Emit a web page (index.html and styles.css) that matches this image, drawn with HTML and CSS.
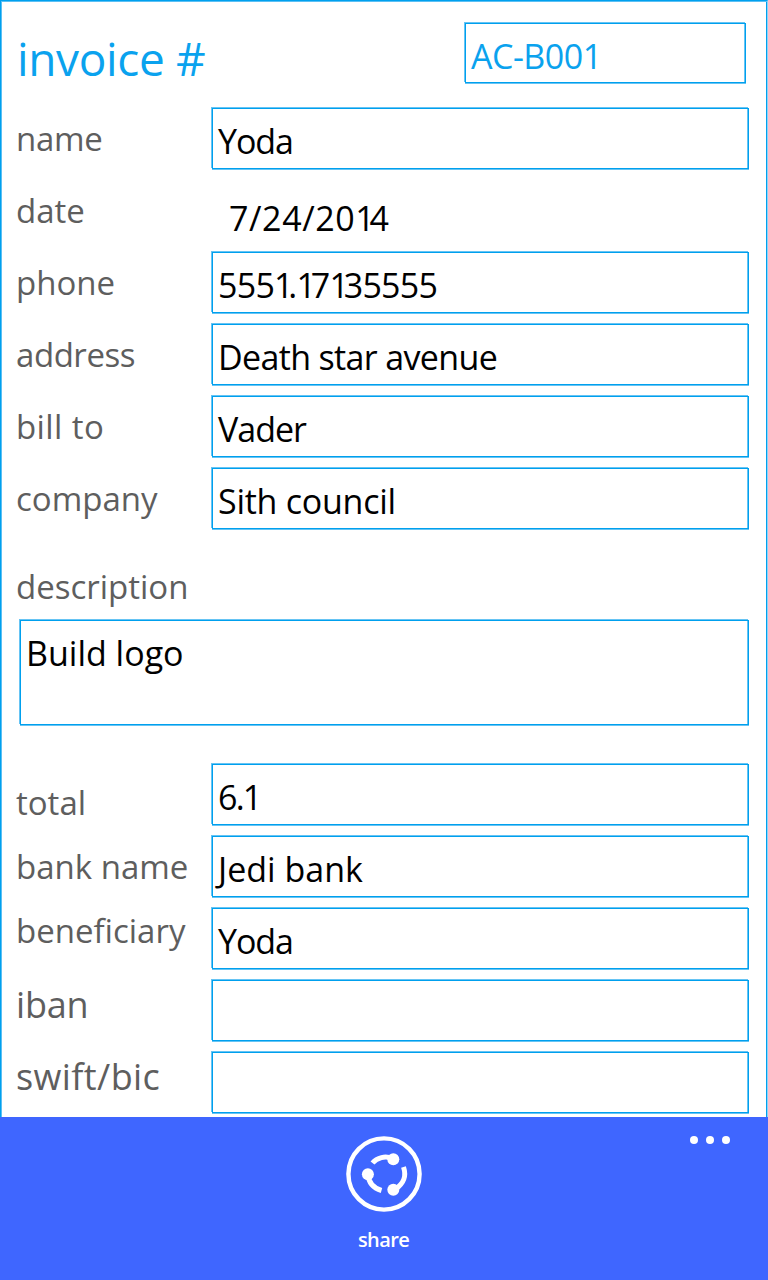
FILE: index.html
```html
<!DOCTYPE html>
<html lang="en">
<head>
<meta charset="utf-8">
<title>Invoice</title>
<link rel="stylesheet" href="styles.css">
</head>
<body>
<main class="page">
  <header class="head">
    <h1 class="title">invoice #</h1>
    <div class="field number"><span class="t-num">AC-B001</span></div>
  </header>
  <section class="rows">
    <div class="row"><span class="label t-name">name</span><div class="field"><span class="t-yoda">Yoda</span></div></div>
    <div class="row"><span class="label t-date">date</span><div class="plain"><span class="t-day">7/24/20<b>1</b>4</span></div></div>
    <div class="row"><span class="label t-phone">phone</span><div class="field"><span class="t-tel">555<b>1</b>.<b>1</b>7<b>1</b>35555</span></div></div>
    <div class="row"><span class="label t-address">address</span><div class="field"><span class="t-avenue">Death star avenue</span></div></div>
    <div class="row"><span class="label t-bill">bill to</span><div class="field"><span class="t-vader">Vader</span></div></div>
    <div class="row"><span class="label t-company">company</span><div class="field"><span class="t-sith">Sith council</span></div></div>
  </section>
  <section class="about">
    <span class="label t-description">description</span>
    <div class="field area"><span class="t-build">Build logo</span></div>
  </section>
  <section class="rows">
    <div class="row"><span class="label t-total">total</span><div class="field"><span class="t-amount">6.1</span></div></div>
    <div class="row"><span class="label t-bank">bank name</span><div class="field"><span class="t-jedi">Jedi bank</span></div></div>
    <div class="row"><span class="label t-benef">beneficiary</span><div class="field"><span class="t-yoda">Yoda</span></div></div>
    <div class="row"><span class="label big t-iban">iban</span><div class="field"></div></div>
    <div class="row"><span class="label big t-swift">swift/bic</span><div class="field"></div></div>
  </section>
</main>
<footer class="bar">
  <div class="share">
    <svg class="icon" width="76" height="76" viewBox="0 0 76 76" fill="none" stroke="#fff">
      <circle cx="38" cy="38" r="35.6" stroke-width="4.4"/>
      <g stroke-width="5">
        <path d="M26.500 27C31 21.500 39 19.500 47 22.500"/>
        <path d="M57.500 31C60.500 40 58.500 47 49 53.500"/>
        <path d="M22 38C22.500 46 27 52 35.500 54.500"/>
      </g>
      <g fill="#fff" stroke="none"><circle cx="47.300" cy="23.200" r="6"/><circle cx="21.900" cy="38.300" r="6"/><circle cx="47.300" cy="53.700" r="6"/></g>
    </svg>
    <span class="t-share">share</span>
  </div>
  <div class="dots"><i></i><i></i><i></i></div>
</footer>
</body>
</html>
```
FILE: styles.css
```css
* { box-sizing: border-box; }
body {
  margin: 0;
  width: 768px;
  height: 1280px;
  overflow: hidden;
  background: #fff;
  color: #000;
  font: 400 34px/46px "Open Sans", "Noto Sans", sans-serif;
}
.page {
  height: 1117px;
  overflow: hidden;
  border: 1px solid #00a0ee;
  border-right-color: #8fd3f7;
  border-bottom: 0;
  box-shadow: inset 1px 1px 0 #5bc0f4, inset -1px 0 0 #00a0ee;
}
.head {
  display: flex;
  justify-content: space-between;
  height: 103px;
  padding: 22px 21px 0 16px;
}
.title {
  margin: 3px 0 0;
  font-size: 46px;
  font-weight: 400;
  line-height: 64px;
  letter-spacing: -0.35px;
  color: #0aa2ee;
}
.field {
  width: 537px;
  height: 61px;
  padding: 9px 0 0 5px;
  border: 1px solid #00a0ee;
  box-shadow: -1px -1px 0 #66c4f4, 0 1px 0 #66c4f4, inset -1px 0 0 #66c4f4;
  white-space: nowrap;
}
.number {
  width: 281px;
  height: 60px;
  color: #0aa2ee;
}
.row {
  display: flex;
  justify-content: space-between;
  height: 72px;
  padding: 4px 18px 0 15px;
}
.label {
  display: block;
  padding-top: 8px;
  height: 60px;
  font-size: 33px;
  color: #5e5e5e;
  white-space: nowrap;
}
.big { font-size: 36px; }
.plain { width: 537px; padding: 15px 0 0 17px; }
.about { height: 224px; padding: 20px 18px 0 15px; }
.about .label { height: 64px; }
.area { width: 729px; height: 105px; margin-left: 4px; }
/* The figure one is set tighter than the other figures */
b { font-weight: 400; letter-spacing: -5.2px; }
.t-num { letter-spacing: -0.5px; }
.t-amount { letter-spacing: -1.8px; }
.t-yoda { letter-spacing: -1.1px; }
.t-day { letter-spacing: 0.6px; }
.t-tel { letter-spacing: -0.75px; }
.t-avenue { letter-spacing: -0.65px; }
.t-vader { letter-spacing: -1px; }
.t-sith { letter-spacing: -0.25px; }
.t-name { letter-spacing: -0.3px; }
.t-address { letter-spacing: -0.45px; }
.t-bill { letter-spacing: 0.4px; }
.t-total { padding-top: 16px; }
.t-benef { padding-top: 0; }
.t-iban, .t-swift { padding-top: 2px; }
.t-iban { letter-spacing: -0.2px; }
.t-swift { letter-spacing: 0.4px; }
.bar {
  position: relative;
  display: flex;
  justify-content: center;
  height: 163px;
  padding-top: 19px;
  background: #3f66ff;
  color: #fff;
}
.share { display: flex; flex-direction: column; align-items: center; font-size: 20px; line-height: 28px; }
.t-share { font-weight: 600; letter-spacing: -0.6px; padding-right: 1px; }
.icon { display: block; margin-bottom: 14px; }
.dots { position: absolute; top: 19px; right: 38px; display: flex; gap: 8px; }
.dots i { width: 8px; height: 8px; border-radius: 50%; background: #fff; }
```
